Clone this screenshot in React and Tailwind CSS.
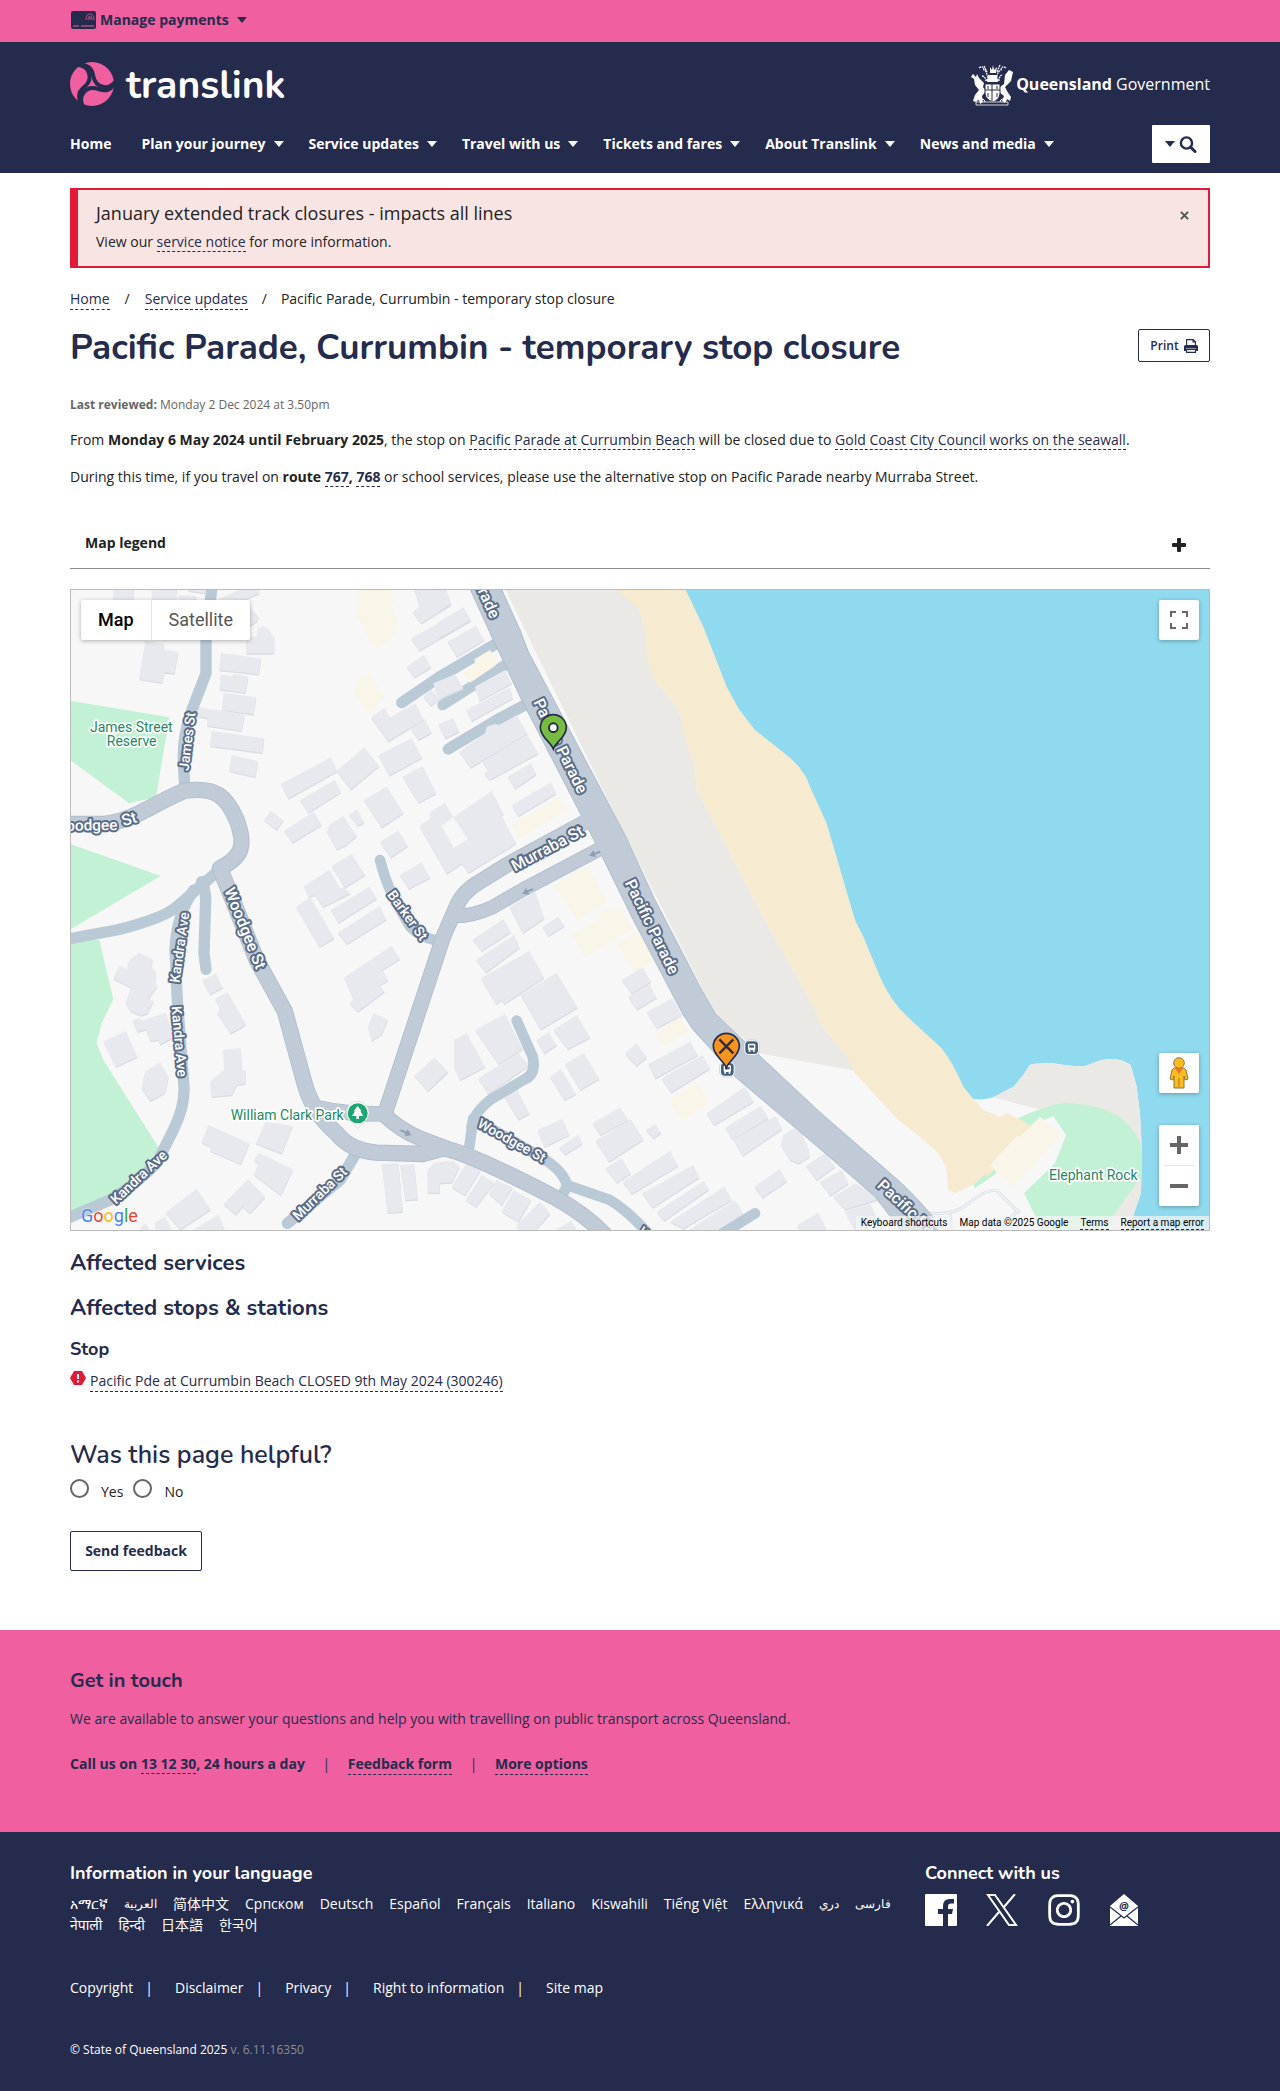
import React from "react";
import { FaInstagram } from "react-icons/fa";

const openSans = "font-['Open_Sans','Noto_Sans','Noto_Sans_CJK_SC','Noto_Sans_CJK_KR',sans-serif]";
const heading = "font-[Nunito,Lato,sans-serif] text-[#252b4c]";

function A({ children, className = "" }) {
  return (
    <a href="#" className={`border-b border-dashed border-[#252b4c] text-[#252b4c] ${className}`}>
      {children}
    </a>
  );
}

function Caret({ className = "" }) {
  return (
    <svg viewBox="0 0 10 6" className={`h-[6px] w-[10px] ${className}`} fill="currentColor" aria-hidden="true">
      <path d="M0 0h10L5 6z" />
    </svg>
  );
}

const land = "#f7f7f7";

/* Map geometry: each sheet is a region of the map with its own origin. */
const sheets = {
  nw: "translate(180 1740)",
  n: "translate(1320 1740)",
  sw: "translate(180 2700)",
  s: "translate(1320 2700)",
  se: "translate(2460 2700)",
};

const buildings = {
  nw: [
    "162,20 222,20 220,60 158,60", "275,20 350,20 348,60 275,60", "355,45 408,48 407,60 355,60", "385,20 440,20 440,40 385,32",
    "470,60 540,28 597,28 597,40 550,60", "567,80 595,110 590,125 567,138",
    "558,170 590,170 592,148 607,137 625,148 642,170 642,220 558,220",
    "256,182 312,192 309,208 354,216 343,280 312,277 306,308 237,297",
    "483,219 603,235 596,283 477,270", "482,284 518,288 520,281 564,290 556,338 478,328",
    "491,338 588,352 580,403 485,390", "413,380 445,388 490,392 553,404 545,452 441,437 443,415 410,408",
    "455,452 612,475 607,518 450,498", "515,526 594,543 585,591 507,573", "663,612 812,532 832,573 685,655",
    "720,660 825,600 843,636 745,698", "830,573 913,502 957,558 872,628", "612,720 632,692 669,720 650,750",
    "672,752 762,695 784,735 697,788", "801,755 808,735 850,708 890,768 858,795 830,808",
    "867,705 892,688 912,727 893,738", "912,660 980,620 1030,698 965,742", "955,525 1055,475 1086,533 988,586",
    "1028,590 1088,558 1128,640 1075,668", "933,412 973,385 990,413 1065,370 1090,418 985,484",
    "1052,445 1095,418 1115,457 1075,480", "1040,260 1092,225 1113,262 1062,292",
    "1053,175 1210,90 1232,122 1077,212", "1060,20 1145,20 1172,75 1083,130 1058,95 1078,80",
    "960,785 1015,752 1043,798 992,832", "1020,885 1085,847 1110,893 1045,926",
    "815,858 875,822 915,885 855,922", "732,918 808,870 848,940 787,978 765,945 745,950",
  ],
  n: [
    "-62,738 -28,715 -30,695 15,668 40,712 155,633 190,700 185,708 228,790 85,878 65,850 20,880",
    "-5,432 40,415 58,455 15,475", "0,20 15,20 33,70 -10,100", "23,185 108,137 132,180 50,230",
    "78,390 210,322 218,355 95,423", "203,590 273,550 288,583 225,625", "216,675 333,607 348,640 235,708",
  ],
  sw: [
    "160,235 178,197 200,208 208,180 237,158 277,178 275,200 288,215 285,240 290,260 265,295 280,303 262,340 243,346 213,335 197,310 212,262",
    "217,360 240,355 245,362 317,338 340,412 300,433 295,420 270,422 258,388 232,395",
    "130,425 197,393 232,470 168,500", "255,515 300,487 325,530 315,578 270,603 245,565",
    "427,240 468,222 488,262 450,283", "465,295 503,277 558,373 512,400 472,340 480,325",
    "490,448 542,445 545,510 556,510 556,550 530,555 515,585 455,590 450,545 492,510",
    "445,675 567,730 542,792 450,752 453,740 425,727", "617,665 697,678 665,760 587,730",
    "597,758 698,808 662,885 582,825 595,790 582,780", "490,912 565,838 615,890 570,940 548,920 527,943",
    "317,937 410,867 452,928 360,988", "283,970 315,950 340,998 290,998", "385,998 475,945 498,998",
    "230,998 255,970 275,998", "965,793 1015,790 1028,935 982,938", "1020,795 1062,792 1073,898 1035,900",
    "1102,812 1120,790 1160,783 1198,800 1175,845 1138,850 1138,878 1102,878", "708,20 752,-8 822,115 778,140",
    "813,30 928,-40 950,-5 835,68", "833,98 960,18 978,58 860,132", "775,0 850,-40 870,-20 790,20",
    "852,233 995,137 1020,177 960,213 970,215 985,240 960,255 973,275 893,335 870,310 880,295",
    "940,340 983,358 965,402 935,422 924,380", "1063,527 1123,473 1163,517 1103,573",
    "1182,420 1220,400 1275,500 1200,540 1182,500",
  ],
  s: [
    "208,20 285,-25 313,55 248,98", "98,118 190,58 213,95 125,153", "108,180 222,105 238,142 138,217",
    "307,80 355,50 373,77 325,108", "123,235 268,153 312,232 240,280 192,312 185,300 168,312",
    "242,285 350,218 412,322 302,388", "340,390 410,345 450,412 383,447", "290,420 325,397 350,435 312,460",
    "105,390 195,342 248,447 175,492", "115,535 235,460 268,495 145,582", "-25,480 0,488 22,515 -25,560",
    "330,530 362,507 408,582 373,600", "375,492 432,460 477,537 420,570", "193,590 232,570 268,640 235,658",
    "292,690 367,657 388,705 313,740", "357,742 415,705 426,732 375,763", "545,240 608,202 632,245 575,280",
    "565,290 628,252 650,293 590,328", "620,335 697,295 725,345 650,384", "555,460 590,430 620,472 588,498",
    "625,492 750,425 773,465 645,535", "665,535 787,465 810,505 693,577", "800,640 915,560 940,605 822,675",
    "855,683 963,617 985,655 878,718", "880,718 1008,648 1026,687 908,767", "458,670 540,622 565,660 480,705",
    "467,722 573,658 610,718 507,785", "618,690 645,672 663,697 640,715", "497,805 545,775 572,820 530,848",
    "548,845 690,753 714,797 575,882", "607,880 760,795 777,832 637,923", "650,935 792,842 806,868 672,962",
    "690,965 853,860 875,900 730,985", "740,995 885,900 925,965 870,998",
    "943,860 1018,807 1040,843 967,893", "1023,735 1030,705 1060,685 1085,700 1105,745 1108,770 1075,790 1050,780",
    "1098,797 1155,760 1185,800 1130,840", "1140,845 1205,810 1225,850 1170,887", "1180,890 1245,850 1325,895 1215,928",
    "1215,935 1290,910 1330,998 1250,998", "1072,975 1135,938 1165,998 1075,998",
    "0,790 40,782 58,800 35,848 0,848", "35,862 80,787 122,810 75,885", "77,900 125,825 162,848 108,920",
    "147,880 170,840 217,862 185,915", "185,935 220,870 273,900 235,965", "230,975 300,905 330,940 280,998 235,998",
    "330,998 395,962 415,998",
  ],
};

/* Buildings that stand over the driveways beside the beach road. */
const upperBuildings = [
  "-20,310 45,283 70,325 10,350 -5,362", "-10,130 70,82 92,120 0,172", "-50,350 -25,328 -5,358 -28,377",
  "105,320 195,270 215,310 118,362", "58,515 135,460 140,440 165,432 180,435 230,405 262,460 180,510 92,562",
  "128,545 262,463 294,520 148,600 133,580 145,572",
];

const shops = {
  nw: ["890,20 990,20 1003,65 995,80 1012,118 1005,165 955,203 930,190 905,125 885,105 893,70", "885,325 890,300 928,277 972,355 920,400 880,330"],
  n: ["213,735 358,650 380,692 240,775", "343,915 440,858 503,965 410,1020"],
  s: ["395,105 540,22 578,88 435,172", "530,130 600,95 643,188 580,215", "645,405 720,350 745,395 675,437", "687,600 772,547 808,608 727,662", "470,40 520,20 560,20 490,55"],
};

const lanes = [
  ["nw", "M456 20 L438 180 V280 L392 400 Q368 470 370 540 L374 620", 34],
  ["sw", "M475 -88 L350 20 Q310 55 170 90 L10 120", 34],
  ["sw", "M402 -30 Q350 40 345 150 L352 300 L372 560 Q375 620 340 690 L290 790 Q220 860 150 900 L10 960", 34],
  ["sw", "M425 -55 Q437 -30 437 0 L432 160 L438 208", 34],
  ["sw", "M960 -120 Q975 -60 1000 -10 L1050 80 Q1080 110 1130 122", 32],
  ["sw", "M885 765 L840 840 L682 970", 34],
  ["s", "M230 362 L278 470 Q290 525 250 540 L150 600 Q90 650 95 690 L88 740", 32],
  ["s", "M100 655 L300 770 Q370 810 382 858 L365 888", 32],
  ["s", "M380 855 L510 900 Q560 930 620 995", 32],
  ["s", "M840 1005 L945 940", 32],
  ["n", "M170 190 L0 290 L-115 368", 34],
  ["n", "M195 255 L8 375", 32],
  ["n", "M255 375 L170 420 L25 507", 34],
];

const streets = [
  ["sw", "M10 -228 H130 C230 -240 280 -290 375 -328 C470 -340 500 -310 530 -240 C560 -160 545 -130 480 -95 L590 180 L675 335 L735 555 Q760 640 830 700 Q870 752 950 758 L1090 762 L1150 745 Q1220 755 1480 890 Q1580 945 1640 1010", 44],
  ["sw", "M765 622 Q850 642 970 642 Q1020 690 1080 715 L1160 745", 42],
  ["sw", "M975 640 L1150 110 L1185 30 Q1205 -25 1260 -55 L1340 -105 L1620 -258", 42],
  ["sw", "M1185 48 Q1240 48 1300 20 L1390 -32 L1640 -164", 38],
];

function Shapes({ list, fill, shade }) {
  return list.map((points) => (
    <g key={points}>
      {shade && <polygon points={points} fill={shade} transform="translate(1 4)" />}
      <polygon points={points} fill={fill} />
    </g>
  ));
}

function Road({ x, y, angle = 0, size = 48, anchor = "middle", children }) {
  return (
    <text
      transform={`translate(${x} ${y}) rotate(${angle})`}
      fontSize={size}
      fontWeight="500"
      textAnchor={anchor}
      dy="16"
      fill="#fff"
      stroke="#5b6c87"
      strokeWidth="12"
      strokeLinejoin="round"
      paintOrder="stroke"
    >
      {children}
    </text>
  );
}

function Place({ x, y, anchor = "middle", children }) {
  return (
    <text x={x} y={y} fontSize="42" textAnchor={anchor} fill="#1f8a66" stroke="#fff" strokeWidth="10" strokeLinejoin="round" paintOrder="stroke">
      {children}
    </text>
  );
}

function BusStop({ x, y }) {
  return (
    <g transform={`translate(${x} ${y})`}>
      <rect x="-23" y="-23" width="46" height="46" rx="15" fill="#fff" stroke="#b9c4d1" strokeWidth="2" />
      <rect x="-19" y="-19" width="38" height="38" rx="11" fill="#44607a" />
      <rect x="-11" y="-12" width="22" height="20" rx="4" fill="#fff" />
      <rect x="-7" y="-7" width="14" height="7" fill="#44607a" />
      <path d="M-9 8h5v5h-5zM4 8h5v5H4z" fill="#fff" />
    </g>
  );
}

function Arrow({ x, y, angle }) {
  return (
    <path transform={`translate(${x} ${y}) rotate(${angle})`} d="M-18 -3H0V-11L18 0L0 11V3H-18z" fill="#8e9db0" />
  );
}

const pin = "M0 64 C-8 42 -39 28 -39 0 A39 39 0 0 1 39 0 C39 28 8 42 0 64z";

function MapDrawing() {
  return (
    <svg viewBox="213 1770 3414 1920" preserveAspectRatio="xMidYMid slice" className="block h-[640px] w-full font-[Roboto,sans-serif]" role="img" aria-label="Map of Pacific Parade, Currumbin">
      <rect x="0" y="1600" width="4000" height="2200" fill={land} />
      <g fill="#c3f1d5">
        <g transform={sheets.nw}>
          <polygon points="20,361 328,412 288,652 207,670 20,533" />
          <polygon points="20,788 302,888 20,1055" />
        </g>
        <polygon transform={sheets.sw} points="20,120 118,120 160,298 125,370 110,430 130,480 297,745 200,870 20,945" />
      </g>
      <polygon fill="#eae9e6" points="1502,1740 1850,1740 1915,1825 1935,1890 1955,2025 1970,2050 2020,2105 2045,2160 2085,2300 2090,2370 2180,2540 2295,2760 2430,3000 2470,3085 2535,3160 2565,3212 2280,3160 2145,3040 1875,2505" />
      <polygon fill="#f6ebd0" points="1850,1770 1915,1825 1935,1890 1942,1980 1955,2025 1970,2050 2020,2105 2045,2160 2060,2230 2085,2300 2090,2370 2180,2540 2295,2760 2430,3000 2470,3085 2535,3160 2565,3220 2695,3360 2760,3410 2815,3460 2838,3500 2845,3570 2865,3580 2940,3545 2975,3500 3080,3400 3088,3375 3060,3360 3000,3350 2950,3330 2920,3297 3200,2700 2300,1740" />
      <path fill="#8fdaee" d="M2043 1740 L2110 1880 L2180 2060 L2215 2125 L2265 2190 L2360 2265 Q2415 2310 2430 2360 L2480 2470 L2565 2760 L2590 2810 L2640 2930 Q2670 3000 2720 3048 L2825 3145 Q2860 3190 2890 3260 L2920 3297 Q2955 3301 2980 3292 L3040 3260 Q3065 3235 3090 3195 Q3100 3188 3160 3190 Q3220 3201 3255 3198 L3305 3180 Q3355 3170 3392 3195 L3410 3260 L3420 3340 L3425 3440 L3423 3580 L3370 3720 H3800 V1700z" />
      <g transform={sheets.se}>
        <path fill="#eae9e6" d="M520 592 L580 560 Q605 535 630 495 Q640 488 700 490 Q760 501 795 498 L845 480 Q895 470 932 495 L950 560 L960 640 L965 740 L963 880 L920 1010 H830 L700 640z" />
        <path fill="#c3f1d5" d="M588 657 Q680 615 735 608 Q800 612 845 625 L900 650 Q950 690 965 740 V828 L870 960 L860 1010 H675 L612 880 L600 680z M460 855 L520 800 L530 820 L465 865z" />
        <polygon fill="#f6ebd0" points="560,640 600,657 628,675 620,720 500,830 450,700" />
        <polygon fill={land} points="660,665 700,648 738,705 705,790 612,880 675,1010 560,1010 470,860 560,810" />
        <polygon fill="#f9f5e9" points="510,795 590,708 600,710 660,650 725,705 610,830 578,860" />
        <path d="M330 940 Q400 945 440 915 Q500 865 530 872 L600 940 M390 940 L400 990 M540 990 L590 935" fill="none" stroke="#d5dbe4" strokeWidth="9" />
        <path d="M330 940 Q400 945 440 915 Q500 865 530 872 L600 940 M390 940 L400 990 M540 990 L590 935" fill="none" stroke={land} strokeWidth="4" />
      </g>

      {Object.entries(buildings).map(([sheet, list]) => (
        <g key={sheet} transform={sheets[sheet]}>
          <Shapes list={list} fill="#e8e9ee" shade="#dadce4" />
        </g>
      ))}
      <g transform={sheets.n}>
        <polygon points="5,738 40,712 83,778 42,803" fill={land} />
      </g>
      {Object.entries(shops).map(([sheet, list]) => (
        <g key={sheet} transform={sheets[sheet]}>
          <Shapes list={list} fill="#f9f5e9" />
        </g>
      ))}

      <g fill="none" strokeLinecap="round" strokeLinejoin="round">
        {lanes.map(([sheet, d, width]) => (
          <path key={d} transform={sheets[sheet]} d={d} stroke="#bac9d6" strokeWidth={width} />
        ))}
        {streets.map(([sheet, d, width]) => (
          <path key={d} transform={sheets[sheet]} d={d} stroke="#adbccb" strokeWidth={width + 5} />
        ))}
      </g>
      <polygon
        points="1398,1740 1480,1920 1565,2100 1750,2458 1788,2532 1900,2760 2050,3045 2080,3090 2135,3150 2205,3230 2470,3455 2625,3590 2710,3700 2820,3720 2795,3645 2750,3595 2705,3550 2460,3337 2250,3140 2145,3040 2100,2960 1965,2700 1875,2505 1585,1955 1560,1890 1492,1740"
        fill="#c1cbd8"
        stroke="#adbccb"
        strokeWidth="3"
      />
      <g fill="none" strokeLinecap="round" strokeLinejoin="round">
        {streets.map(([sheet, d, width]) => (
          <path key={d} transform={sheets[sheet]} d={d} stroke="#c1cbd8" strokeWidth={width} />
        ))}
      </g>
      <g transform={sheets.n}>
        <Shapes list={upperBuildings} fill="#e8e9ee" shade="#dadce4" />
        <Shapes list={["103,238 150,210 175,245 165,258 90,308 70,280 107,255"]} fill="#f9f5e9" />
        <Arrow x="464" y="821" angle="162" />
        <Arrow x="263" y="934" angle="155" />
      </g>
      <g transform={sheets.sw}>
        <Arrow x="1038" y="698" angle="25" />
      </g>

      <g transform={sheets.nw}>
        <Place x="214" y="456">James Street</Place>
        <Place x="215" y="498">Reserve</Place>
        <Road x="380" y="484" angle="-83" size="42">James St</Road>
        <Road x="172" y="734" angle="-1" size="46" anchor="end">Woodgee</Road>
        <Road x="207" y="717" angle="-17">St</Road>
      </g>
      <g transform={sheets.n}>
        <Road x="166" y="112" angle="66" anchor="end">Parade</Road>
        <Road x="361" y="498" angle="64">Pacific Parade</Road>
        <Road x="322" y="805" angle="-28">Murraba St</Road>
      </g>
      <g transform={sheets.sw}>
        <Road x="555" y="85" angle="68">Woodgee St</Road>
        <Road x="1044" y="45" angle="54" size="42">Barker St</Road>
        <Road x="357" y="142" angle="-82" size="42">Kandra Ave</Road>
        <Road x="360" y="424" angle="85" size="42">Kandra Ave</Road>
        <Road x="235" y="830" angle="-43" size="42">Kandra Ave</Road>
        <Road x="778" y="880" angle="-44" size="42">Murraba St</Road>
        <Place x="512" y="660" anchor="start">William Clark Park</Place>
        <path d="M893 686 L878 669 A34 34 0 1 1 908 669z" fill="#fff" stroke="#c6ccd4" strokeWidth="2" />
        <circle cx="893" cy="640" r="30" fill="#1ba672" />
        <path d="M893 618 L905 634 H901 L910 648 H897 V657 H889 V648 H876 L885 634 H881z" fill="#fff" />
      </g>
      <g transform={sheets.s}>
        <Road x="636" y="80" angle="64">Pacific Parade</Road>
        <Road x="216" y="720" angle="29" size="42">Woodgee St</Road>
        <Road x="602" y="988" angle="42" size="42" anchor="start">Woodgee St</Road>
        <BusStop x="935" y="443" />
        <BusStop x="862" y="508" />
        <g transform="translate(859 439)" stroke="#252b4c">
          <path d={pin} fill="#f7941e" strokeWidth="5" />
          <path d="M-21 -21L21 21M21 -21L-21 21" strokeWidth="7" />
        </g>
      </g>
      <g transform={sheets.se}>
        <Road x="180" y="848" angle="43" anchor="start">Pacific Parade</Road>
        <Place x="820" y="840">Elephant Rock</Place>
      </g>
      <g transform="translate(1660 2183)" stroke="#252b4c">
        <path d={pin} fill="#76bd3f" strokeWidth="5" />
        <circle r="13" fill="#fff" strokeWidth="6" />
      </g>
    </svg>
  );
}

function RouteMap() {
  const control = "flex h-[40px] w-[40px] items-center justify-center rounded-[2px] bg-white shadow-[0_1px_4px_rgba(0,0,0,0.3)]";
  return (
    <section className="relative mt-5 overflow-hidden border border-[#bbb] font-[Roboto,sans-serif]">
      <MapDrawing />
      <div className="absolute top-[10px] left-[10px] flex rounded-[2px] bg-white text-[18px] shadow-[0_1px_4px_rgba(0,0,0,0.3)]">
        <button type="button" className="h-[40px] border-r border-[#e6e6e6] px-[17px] font-medium text-black">Map</button>
        <button type="button" className="h-[40px] px-[17px] text-[#565656]">Satellite</button>
      </div>
      <button type="button" aria-label="Toggle fullscreen view" className={`absolute top-[10px] right-[10px] ${control}`}>
        <svg viewBox="0 0 18 18" className="h-[18px] w-[18px]" fill="#666"><path d="M0 0v6h2V2h4V0H0zm16 0h-4v2h4v4h2V0h-2zm0 16h-4v2h6v-6h-2v4zM2 12H0v6h6v-2H2v-4z" /></svg>
      </button>
      <div className="absolute right-[10px] bottom-[24px] flex flex-col gap-8">
        <button type="button" aria-label="Street View" className={control}>
          <svg viewBox="0 0 20 32" className="h-[32px] w-[20px]">
            <path d="M5 11h10l2 2 2 9-3 1-1-4v12H5V19l-1 4-3-1 2-9z" fill="#fbbc1d" stroke="#8c7442" />
            <circle cx="10" cy="6" r="5.3" fill="#fbbc1d" stroke="#8c7442" />
            <path d="M6 11h8l-4 6z" fill="#e2762b" />
            <path d="M10 21v9" stroke="#a3792b" />
          </svg>
        </button>
        <div className="flex w-[40px] flex-col items-center rounded-[2px] bg-white shadow-[0_1px_4px_rgba(0,0,0,0.3)]">
          <button type="button" aria-label="Zoom in" className="flex h-[40px] w-[40px] items-center justify-center">
            <svg viewBox="0 0 18 18" className="h-[18px] w-[18px]" fill="#666"><path d="M7 0h4v7h7v4h-7v7H7v-7H0V7h7z" /></svg>
          </button>
          <span className="h-px w-[30px] bg-[#e6e6e6]" />
          <button type="button" aria-label="Zoom out" className="flex h-[40px] w-[40px] items-center justify-center">
            <svg viewBox="0 0 18 18" className="h-[18px] w-[18px]" fill="#666"><path d="M0 7h18v4H0z" /></svg>
          </button>
        </div>
      </div>
      <a href="#" aria-label="Google Maps" className="absolute bottom-[2px] left-[10px] text-[18px] leading-6 [text-shadow:0_0_2px_white]">
        <span className="text-[#4285f4]">G</span><span className="text-[#ea4335]">o</span><span className="text-[#fbbc05]">o</span><span className="text-[#4285f4]">g</span><span className="text-[#34a853]">l</span><span className="text-[#ea4335]">e</span>
      </a>
      <div className="absolute right-0 bottom-0 flex h-[14px] gap-3 bg-[#f5f5f5]/70 px-[5px] text-[10px] leading-[14px] text-black">
        <button type="button">Keyboard shortcuts</button>
        <span>Map data ©2025 Google</span>
        <a href="#" className="border-b border-dashed border-[#252b4c]">Terms</a>
        <a href="#" className="border-b border-dashed border-[#252b4c]">Report a map error</a>
      </div>
    </section>
  );
}

function TranslinkLogo() {
  return (
    <a href="#" aria-label="Translink" className="flex h-[44px] items-start gap-3">
      <svg viewBox="0 0 44 44" className="h-[44px] w-[44px]">
        <circle cx="22" cy="22" r="22" fill="#f060a0" />
        <g fill="none" stroke="#252b4c" strokeWidth="4">
          <path d="M5 3 Q21 1 23 13 Q25 24 34 25 Q40 26 45 20" />
          <path d="M5 3 Q21 1 23 13 Q25 24 34 25 Q40 26 45 20" transform="rotate(120 22 22)" />
          <path d="M5 3 Q21 1 23 13 Q25 24 34 25 Q40 26 45 20" transform="rotate(240 22 22)" />
        </g>
      </svg>
      <span className="pt-[2px] font-[Nunito,Lato,sans-serif] text-[39px] leading-[44px] font-bold text-white">translink</span>
    </a>
  );
}

function Crest() {
  return (
    <svg viewBox="0 0 44 44" className="h-[44px] w-[44px]" fill="#fff" aria-hidden="true">
      <path d="M3 12l3 3 1-3 2 4 5 5-1 4 3 4-4 5 1 6-3 2-1-5-3 3-3-1 2-6 4-5-4-5-1-6-3-2z" />
      <path d="M43 10l-2 9-6 6 2 4 4 6-1 4-3-2-2 4-3-2 2-5-5-4 1-5 4-3 1-9 4-5z" />
      <path d="M15 22h15v10q-1 6-7 8-7-2-8-8z" stroke="#252b4c" strokeWidth="1" />
      <path d="M15 28h15M22 22v17M18 24v3M27 24v3M18 31v4M27 31v4" stroke="#252b4c" strokeWidth="1" />
      <path d="M18 13h9l1 7H17zM20 5l2 3 1-5 1 5 3-3-1 6h-6z" />
      <path d="M9 6q4-3 5 2 3 1 3 6M36 6q-4-3-5 2-3 1-4 6M12 14q3 0 4 5M32 13q-3 1-3 6M14 4l3 6M30 3l-3 7M17 15h11M16 18h13" fill="none" stroke="#fff" strokeWidth="1.3" strokeDasharray="2 .7" />
      <path d="M6 40h32v3H6z" fill="none" stroke="#fff" strokeWidth=".8" />
      <path d="M8 38q6-3 7 2M37 38q-6-3-7 2" fill="none" stroke="#fff" />
    </svg>
  );
}

function PrintIcon() {
  return (
    <svg viewBox="0 0 14 14" className="h-[14px] w-[14px]" fill="#252b4c" aria-hidden="true">
      <path d="M2.6 6V.6h6.6l2.2 2.2V6M9 .8V3h2.2" fill="none" stroke="#252b4c" strokeWidth="1.1" />
      <path d="M1.5 6h11Q14 6 14 7.5V12h-2V9.5H2V12H0V7.5Q0 6 1.5 6z" />
      <path d="M2.6 10.5h8.8v2.9H2.6z" fill="none" stroke="#252b4c" strokeWidth="1.1" />
    </svg>
  );
}

const menu = ["Plan your journey", "Service updates", "Travel with us", "Tickets and fares", "About Translink", "News and media"];
const languages = ["አማርኛ", "العربية", "简体中文", "Српском", "Deutsch", "Español", "Français", "Italiano", "Kiswahili", "Tiếng Việt", "Ελληνικά", "دري", "فارسی", "नेपाली", "हिन्दी", "日本語", "한국어"];
const arabicScript = new Set(["العربية", "دري", "فارسی"]);
const legal = ["Copyright", "Disclaimer", "Privacy", "Right to information", "Site map"];
const wrap = "mx-auto w-full max-w-[1170px] px-[15px]";

export default function App() {
  return (
    <div className={`${openSans} bg-white text-[14px] leading-5 text-[#222]`}>
      <div className="bg-[#f060a0]">
        <div className={`${wrap} flex h-[42px] items-center pb-[2px]`}>
          <button type="button" className="flex items-center font-bold text-[#252b4c]">
            <svg viewBox="0 0 26 18" className="mr-1 h-[18px] w-[26px]">
              <rect x="1" width="25" height="18" rx="2" fill="#252b4c" />
              <path d="M3 15h6M11 15h13" stroke="#f060a0" strokeWidth="1" />
              <path d="M16 9q0-6 4-6t4 6M18 9q0-4 2-4t2 4M20 9V6" fill="none" stroke="#f060a0" strokeWidth=".7" />
            </svg>
            Manage payments
            <Caret className="ml-2" />
          </button>
        </div>
      </div>

      <header className="bg-[#252b4c] text-white">
        <div className={`${wrap} flex items-center justify-between pt-5`}>
          <TranslinkLogo />
          <a href="#" className="flex items-center gap-[2px] text-[16px] font-bold">
            <Crest />
            <span>Queensland <span className="font-normal">Government</span></span>
          </a>
        </div>
        <div className={`${wrap} flex items-center justify-between pt-[19px] pb-[10px]`}>
          <nav className="flex gap-[25px] font-bold">
            <a href="#" className="mr-[5px]">Home</a>
            {menu.map((item) => (
              <button type="button" key={item} className="flex items-center gap-2">
                {item}
                <Caret />
              </button>
            ))}
          </nav>
          <button type="button" aria-label="Search" className="flex h-[38px] w-[58px] items-center justify-center gap-1 rounded-[1px] bg-white text-[#252b4c]">
            <Caret />
            <svg viewBox="0 0 18 18" className="h-[18px] w-[18px]" fill="none" stroke="currentColor" strokeWidth="2.4" strokeLinecap="round">
              <circle cx="7.5" cy="8" r="5.6" /><path d="M12 12.5l4 4" strokeWidth="3" />
            </svg>
          </button>
        </div>
      </header>

      <main className={wrap}>
        <div className="mt-[15px] flex h-[80px] justify-between border-2 border-l-8 border-[#e31937] bg-[#f8e5e3] pt-[13px] pr-4 pl-[18px]">
          <div>
            <p className="text-[18px] leading-5">January extended track closures - impacts all lines</p>
            <p className="mt-[9px]">View our <A>service notice</A> for more information.</p>
          </div>
          <button type="button" aria-label="Close" className="flex h-6 w-4 items-center justify-center">
            <svg viewBox="0 0 10 10" className="h-[9px] w-[9px]" stroke="#555" strokeWidth="2.2"><path d="M1 1l8 8M9 1L1 9" /></svg>
          </button>
        </div>

        <nav aria-label="Breadcrumb" className="mt-[21px] flex">
          <A>Home</A>
          <span className="px-[15px]">/</span>
          <A>Service updates</A>
          <span className="px-[14px]">/</span>
          <span>Pacific Parade, Currumbin - temporary stop closure</span>
        </nav>

        <div className="mt-4 flex items-start justify-between">
          <h1 className={`${heading} text-[35px] leading-[44px] font-bold`}>Pacific Parade, Currumbin - temporary stop closure</h1>
          <button type="button" className="mt-[3px] flex h-[33px] w-[72px] items-center justify-center gap-[5px] rounded-[2px] border border-[#252b4c] text-[12px] font-semibold text-[#252b4c]">
            Print <PrintIcon />
          </button>
        </div>

        <p className="mt-[25px] text-[12px] text-[#666]"><strong className="font-bold">Last reviewed:</strong> Monday 2 Dec 2024 at 3.50pm</p>
        <p className="mt-[15px]">
          From <strong>Monday 6 May 2024 until February 2025</strong>, the stop on <A>Pacific Parade at Currumbin Beach</A> will be closed due to <A>Gold Coast City Council works on the seawall</A>.
        </p>
        <p className="mt-[17px]">
          During this time, if you travel on <strong>route <A>767</A>, <A>768</A></strong> or school services, please use the alternative stop on Pacific Parade nearby Murraba Street.
        </p>

        <button type="button" className="mt-[39px] flex w-full items-center justify-between border-b border-[#8b8b8b] pt-[7px] pr-[24px] pb-[15px] pl-[15px] font-bold">
          Map legend
          <svg viewBox="0 0 14 14" className="mt-1 h-[14px] w-[14px]" fill="#222"><path d="M5 1q0-1 1-1h2q1 0 1 1v4h4q1 0 1 1v2q0 1-1 1H9v4q0 1-1 1H6q-1 0-1-1V9H1Q0 9 0 8V6q0-1 1-1h4z" /></svg>
        </button>

        <RouteMap />

        <h2 className={`${heading} mt-5 text-[22px] leading-6 font-bold`}>Affected services</h2>
        <h2 className={`${heading} mt-[21px] text-[22px] leading-6 font-bold`}>Affected stops &amp; stations</h2>
        <h3 className={`${heading} mt-[19px] text-[18px] leading-5 font-bold`}>Stop</h3>
        <p className="mt-3 flex items-start">
          <svg viewBox="0 0 16 14" className="mr-1 h-[14px] w-[16px]">
            <path d="M4 0h8l4 7-4 7H4L0 7z" fill="#e31937" />
            <path d="M8 3v5M8 9.5v2" stroke="#fff" strokeWidth="2" />
          </svg>
          <A>Pacific Pde at Currumbin Beach CLOSED 9th May 2024 (300246)</A>
        </p>

        <form className="pt-[47px]" onSubmit={(e) => e.preventDefault()}>
          <fieldset>
            <legend className={`${heading} text-[25px] leading-8 font-semibold`}>Was this page helpful?</legend>
            <div className="mt-2 flex gap-[10px]">
              {["Yes", "No"].map((answer) => (
                <label key={answer} className="flex h-6 items-start gap-3">
                  <input type="radio" name="helpful" className="h-[19px] w-[19px] appearance-none rounded-full border-2 border-[#666] checked:bg-[#666]" />
                  <span className="pt-[3px]">{answer}</span>
                </label>
              ))}
            </div>
          </fieldset>
          <button type="submit" className="mt-[28px] h-[40px] w-[132px] rounded-[2px] border border-[#252b4c] font-bold text-[#252b4c]">Send feedback</button>
        </form>
      </main>

      <section className="mt-[59px] bg-[#f060a0] text-[#252b4c]">
        <div className={`${wrap} pt-[39px] pb-[57px]`}>
          <h2 className={`${heading} text-[20px] leading-6 font-bold`}>Get in touch</h2>
          <p className="mt-4">We are available to answer your questions and help you with travelling on public transport across Queensland.</p>
          <p className="mt-[25px] flex font-bold">
            <span>Call us on <A>13 12 30</A>, 24 hours a day</span>
            <span className="w-[43px] text-center font-normal">|</span>
            <A>Feedback form</A>
            <span className="w-[43px] text-center font-normal">|</span>
            <A>More options</A>
          </p>
        </div>
      </section>

      <footer className="bg-[#252b4c] text-white">
        <div className={`${wrap} pt-[29px] pb-[31px]`}>
          <div className="flex">
            <div className="w-3/4">
              <h2 className="font-[Nunito,Lato,sans-serif] text-[18px] leading-6 font-bold">Information in your language</h2>
              <ul className="mt-[9px] flex flex-wrap gap-x-4">
                {languages.map((name) => (
                  <li key={name} className={`h-[21px] ${arabicScript.has(name) ? "text-[12px]" : ""}`}><a href="#">{name}</a></li>
                ))}
              </ul>
            </div>
            <div className="w-1/4">
              <h2 className="font-[Nunito,Lato,sans-serif] text-[18px] leading-6 font-bold">Connect with us</h2>
              <div className="mt-[7px] flex items-center gap-[29px]">
                <a href="#" aria-label="Facebook">
                  <svg viewBox="0 0 32 32" className="h-[32px] w-[32px]">
                    <rect width="32" height="32" rx="1" fill="#fff" />
                    <path d="M18 32V20h-5v-5h5v-3q0-7 7-7h4v4.5h-3q-3 0-3 3V15h5l-1 5h-4v12z" fill="#252b4c" />
                  </svg>
                </a>
                <a href="#" aria-label="X">
                  <svg viewBox="0 0 32 32" className="h-[32px] w-[32px]" fill="none" stroke="#fff" strokeWidth="2">
                    <path d="M2 1h7l21 30h-7z" /><path d="M29 0L18 13M13 18L1 32" />
                  </svg>
                </a>
                <a href="#" aria-label="Instagram"><FaInstagram className="h-[36px] w-[34px]" /></a>
                <a href="#" aria-label="Email">
                  <svg viewBox="0 0 28 32" className="h-[32px] w-[28px]">
                    <path d="M0 12L14 0l14 12v20H0z" fill="#fff" />
                    <path d="M0 13l14 11 14-11M0 31l11-9M28 31l-11-9" fill="none" stroke="#252b4c" strokeWidth="1.3" />
                    <text x="14" y="16" textAnchor="middle" fontSize="11" fontWeight="700" fill="#252b4c">@</text>
                  </svg>
                </a>
              </div>
            </div>
          </div>
          <ul className="mt-[42px] flex">
            {legal.map((item, i) => (
              <li key={item} className="flex">
                <a href="#">{item}</a>
                {i < legal.length - 1 && <span className="mr-[22px] ml-3">|</span>}
              </li>
            ))}
          </ul>
          <p className="mt-[42px] text-[12px]">© State of Queensland 2025 <span className="text-[#8b8d9a]">v. 6.11.16350</span></p>
        </div>
      </footer>
    </div>
  );
}
